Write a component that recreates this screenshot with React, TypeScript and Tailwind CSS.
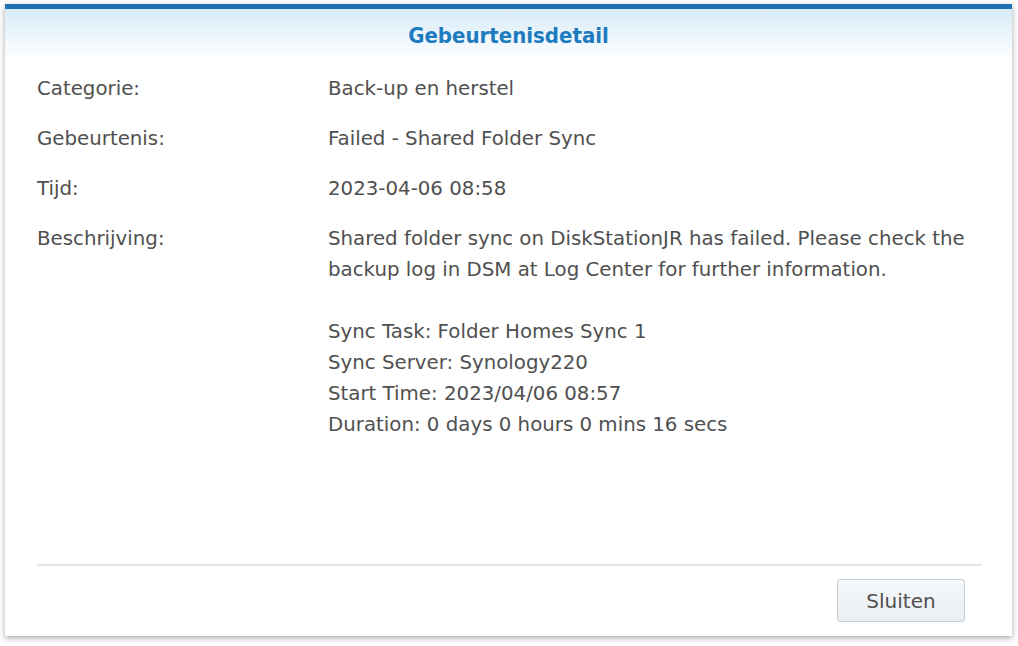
export default function App() {
  const rows = [
    { label: 'Categorie:', value: ['Back-up en herstel'] },
    { label: 'Gebeurtenis:', value: ['Failed - Shared Folder Sync'] },
    { label: 'Tijd:', value: ['2023-04-06 08:58'] },
    {
      label: 'Beschrijving:',
      value: [
        'Shared folder sync on DiskStationJR has failed. Please check the',
        'backup log in DSM at Log Center for further information.',
        '',
        'Sync Task: Folder Homes Sync 1',
        'Sync Server: Synology220',
        'Start Time: 2023/04/06 08:57',
        'Duration: 0 days 0 hours 0 mins 16 secs',
      ],
    },
  ];

  return (
    <div className="w-[1018px] h-[646px] bg-white pt-[4px] pl-[5px] overflow-hidden" style={{ fontFamily: '"DejaVu Sans", Verdana, sans-serif' }}>
      <div className="w-[1007px] h-[632px] bg-white border-t-[5px] border-[#1f72b4] shadow-[0_2px_6px_rgba(0,0,0,0.35)] flex flex-col">
        <div className="h-[52px] flex items-center justify-center bg-gradient-to-b from-[#d8ebf8] to-white">
          <span className="text-[22px] font-bold text-[#1d7bbf]" style={{ fontFamily: '"DejaVu Sans Condensed", Tahoma, sans-serif' }}>
            Gebeurtenisdetail
          </span>
        </div>
        <div className="flex-1 flex flex-col gap-[19px] pt-[12px] pl-[32px] text-[19.8px] leading-[31px] text-[#505050]">
          {rows.map(r => (
            <div key={r.label} className="flex">
              <div className="w-[291px] shrink-0">{r.label}</div>
              <div>
                {r.value.map((line, i) => (
                  <div key={i} className="h-[31px] whitespace-nowrap">{line}</div>
                ))}
              </div>
            </div>
          ))}
        </div>
        <div className="ml-[32px] mr-[30px] border-t-2 border-[#e6e6e6]" />
        <div className="flex justify-end pr-[47px] pt-[13px] pb-[14px]">
          <button className="w-[128px] h-[43px] rounded-[3px] border border-[#c4ccd4] bg-gradient-to-b from-[#f5f8fa] to-[#e9eef2] text-[20px] text-[#505050]">
            Sluiten
          </button>
        </div>
      </div>
    </div>
  );
}
